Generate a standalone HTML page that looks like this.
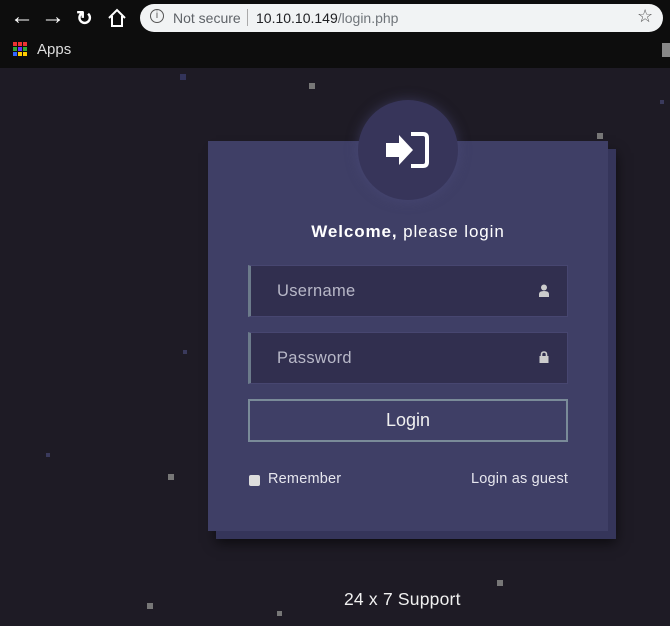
<!DOCTYPE html>
<html><head><style>
*{margin:0;padding:0;box-sizing:border-box}
body{width:670px;height:626px;overflow:hidden;background:#1e1b25;font-family:"Liberation Sans",sans-serif;position:relative}
.top{position:absolute;left:0;top:0;width:670px;height:68px;background:#0d0d0d}
.omni{position:absolute;left:140px;top:4px;width:523px;height:28px;border-radius:14px;background:#f1f3f4}
.t{position:absolute;white-space:nowrap}
.dot{position:absolute;width:6px;height:6px;background:#777}
.card2{position:absolute;left:216px;top:149px;width:400px;height:390px;background:#35355a;box-shadow:0 4px 12px rgba(0,0,0,.6)}
.card{position:absolute;left:208px;top:141px;width:400px;height:390px;background:#3f3f66}
.circle{position:absolute;left:358px;top:100px;width:100px;height:100px;border-radius:50%;background:#37355a;box-shadow:0 0 12px rgba(80,80,130,.5)}
.inp{position:absolute;left:248px;width:320px;height:52px;background:#312f4f;border:1px solid #474670;border-left:3px solid #6c7b8b}
.inp span{position:absolute;left:26px;top:16px;font-size:16.5px;color:#b8b8c8;letter-spacing:.3px}
.btn{position:absolute;left:248px;top:399px;width:320px;height:43px;border:2px solid #7a8b99;color:#f0f0f0;font-size:18px;text-align:center;line-height:39px}
</style></head><body>
<div class="top"></div>
<div class="t" style="left:10px;top:3px;color:#fff;font-size:24px">&#8592;</div>
<div class="t" style="left:41px;top:3px;color:#fff;font-size:24px">&#8594;</div>
<div class="t" style="left:76px;top:6px;color:#fff;font-size:20px;font-weight:bold">&#8635;</div>
<svg class="t" style="left:107px;top:8px" width="20" height="20"><path d="M2 10 L10 2 L18 10 M5 8 V18 H15 V8" fill="none" stroke="#fff" stroke-width="2"/></svg>
<div class="omni"></div>
<div class="t" style="left:150px;top:9px;width:14px;height:14px;border:1.5px solid #555;border-radius:50%;font-size:10px;color:#555;text-align:center;line-height:11px">i</div>
<div class="t" style="left:173px;top:10px;font-size:14px;color:#5f6368">Not secure</div>
<div class="t" style="left:247px;top:9px;width:1px;height:17px;background:#aaa"></div>
<div class="t" style="left:256px;top:10px;font-size:14px;color:#202124">10.10.10.149<span style="color:#70757a">/login.php</span></div>
<div class="t" style="left:637px;top:6px;font-size:18px;color:#555">&#9734;</div>
<svg class="t" style="left:13px;top:42px" width="14" height="15"><g><rect x="0" y="0" width="4" height="4" fill="#e33"/><rect x="5" y="0" width="4" height="4" fill="#e33"/><rect x="10" y="0" width="4" height="4" fill="#e33"/><rect x="0" y="5" width="4" height="4" fill="#3a3"/><rect x="5" y="5" width="4" height="4" fill="#63f"/><rect x="10" y="5" width="4" height="4" fill="#3a3"/><rect x="0" y="10" width="4" height="4" fill="#36f"/><rect x="5" y="10" width="4" height="4" fill="#fc0"/><rect x="10" y="10" width="4" height="4" fill="#fc0"/></g></svg>
<div class="t" style="left:37px;top:41px;font-size:15px;color:#ddd">Apps</div>
<div class="t" style="left:662px;top:43px;width:8px;height:14px;background:#888"></div>

<div class="dot" style="left:309px;top:83px"></div>
<div class="dot" style="left:180px;top:74px;background:#33345a"></div>
<div class="dot" style="left:597px;top:133px"></div>
<div class="dot" style="left:168px;top:474px"></div>
<div class="dot" style="left:147px;top:603px"></div>
<div class="dot" style="left:497px;top:580px"></div>
<div class="dot" style="left:277px;top:611px;width:5px;height:5px"></div>
<div class="dot" style="left:183px;top:350px;width:4px;height:4px;background:#3a3a5c"></div>
<div class="dot" style="left:46px;top:453px;width:4px;height:4px;background:#3a3a5c"></div>
<div class="dot" style="left:660px;top:100px;width:4px;height:4px;background:#3a3a5c"></div>

<div class="card2"></div>
<div class="card"></div>
<div class="circle"></div>
<svg class="t" style="left:385px;top:131px" width="46" height="38" viewBox="0 0 46 38"><path d="M1 12 H14 V4 L28 19 L14 34 V26 H1 Z" fill="#fff"/><path d="M26 3 H38 Q42 3 42 7 V31 Q42 35 38 35 H26" fill="none" stroke="#fff" stroke-width="4"/></svg>
<div class="t" style="left:0;width:816px;top:222px;text-align:center;font-size:17px;color:#fff;letter-spacing:.9px"><b>Welcome,</b> please login</div>
<div class="inp" style="top:265px"><span>Username</span>
<svg style="position:absolute;right:18px;top:18px" width="10" height="13"><circle cx="5" cy="3.5" r="3" fill="#ccc"/><path d="M0 13 V10 Q0 7 5 7 Q10 7 10 10 V13Z" fill="#ccc"/></svg></div>
<div class="inp" style="top:332px"><span>Password</span>
<svg style="position:absolute;right:18px;top:18px" width="10" height="12"><path d="M2.5 5 V3.5 Q2.5 1 5 1 Q7.5 1 7.5 3.5 V5" fill="none" stroke="#ccc" stroke-width="1.6"/><rect x="0.5" y="5" width="9" height="7" fill="#ccc"/></svg></div>
<div class="btn">Login</div>
<div class="t" style="left:249px;top:475px;width:11px;height:11px;background:#ddd;border-radius:2px"></div>
<div class="t" style="left:268px;top:471px;font-size:14.5px;color:#e6e6ee;letter-spacing:.2px">Remember</div>
<div class="t" style="left:471px;top:471px;font-size:14.5px;color:#e6e6ee;letter-spacing:.2px">Login as guest</div>
<div class="t" style="left:344px;top:589px;font-size:17.5px;color:#f0f0f0;letter-spacing:.2px">24 x 7 Support</div>
</body></html>
